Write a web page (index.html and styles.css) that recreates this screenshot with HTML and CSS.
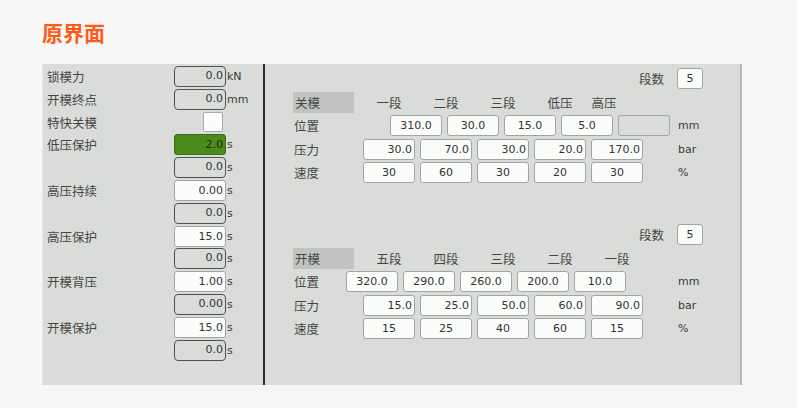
FILE: index.html
```
<!DOCTYPE html>
<html lang="zh">
<head>
<meta charset="utf-8">
<title>原界面</title>
<link rel="stylesheet" href="styles.css">
</head>
<body>
<div class="page">
  <h1 class="title">原界面</h1>
  <div class="panel">
    <div class="left">
      <div class="lrow"><span class="lbl">锁模力</span><span class="fld ro">0.0</span><span class="unit">kN</span></div>
      <div class="lrow"><span class="lbl">开模终点</span><span class="fld ro">0.0</span><span class="unit">mm</span></div>
      <div class="lrow"><span class="lbl">特快关模</span><span class="chk"></span><span class="unit"></span></div>
      <div class="lrow"><span class="lbl">低压保护</span><span class="fld green">2.0</span><span class="unit">s</span></div>
      <div class="lrow"><span class="lbl"></span><span class="fld ro">0.0</span><span class="unit">s</span></div>
      <div class="lrow"><span class="lbl">高压持续</span><span class="fld ed">0.00</span><span class="unit">s</span></div>
      <div class="lrow"><span class="lbl"></span><span class="fld ro">0.0</span><span class="unit">s</span></div>
      <div class="lrow"><span class="lbl">高压保护</span><span class="fld ed">15.0</span><span class="unit">s</span></div>
      <div class="lrow"><span class="lbl"></span><span class="fld ro">0.0</span><span class="unit">s</span></div>
      <div class="lrow"><span class="lbl">开模背压</span><span class="fld ed">1.00</span><span class="unit">s</span></div>
      <div class="lrow"><span class="lbl"></span><span class="fld ro">0.00</span><span class="unit">s</span></div>
      <div class="lrow"><span class="lbl">开模保护</span><span class="fld ed">15.0</span><span class="unit">s</span></div>
      <div class="lrow"><span class="lbl"></span><span class="fld ro">0.0</span><span class="unit">s</span></div>
    </div>
    <div class="divider"></div>
    <div class="right">
      <div class="group">
        <div class="segrow"><span class="seglbl">段数</span><span class="fld ed seg">5</span></div>
        <div class="grow"><span class="hdlbl">关模</span>
          <div class="cells"><span class="hd">一段</span><span class="hd">二段</span><span class="hd">三段</span><span class="hd">低压</span><span class="hd hd-shift">高压</span></div>
        </div>
        <div class="grow"><span class="rlbl">位置</span>
          <div class="cells cells-r"><span class="fld ed c">310.0</span><span class="fld ed c">30.0</span><span class="fld ed c">15.0</span><span class="fld ed c">5.0</span><span class="fld dis"></span></div>
          <span class="unit">mm</span>
        </div>
        <div class="grow"><span class="rlbl">压力</span>
          <div class="cells"><span class="fld ed">30.0</span><span class="fld ed">70.0</span><span class="fld ed">30.0</span><span class="fld ed">20.0</span><span class="fld ed">170.0</span></div>
          <span class="unit">bar</span>
        </div>
        <div class="grow"><span class="rlbl">速度</span>
          <div class="cells"><span class="fld ed c">30</span><span class="fld ed c">60</span><span class="fld ed c">30</span><span class="fld ed c">20</span><span class="fld ed c">30</span></div>
          <span class="unit">%</span>
        </div>
      </div>
      <div class="group group2">
        <div class="segrow"><span class="seglbl">段数</span><span class="fld ed seg">5</span></div>
        <div class="grow"><span class="hdlbl">开模</span>
          <div class="cells"><span class="hd">五段</span><span class="hd">四段</span><span class="hd">三段</span><span class="hd">二段</span><span class="hd">一段</span></div>
        </div>
        <div class="grow"><span class="rlbl">位置</span>
          <div class="cells cells-l"><span class="fld ed c">320.0</span><span class="fld ed c">290.0</span><span class="fld ed c">260.0</span><span class="fld ed c">200.0</span><span class="fld ed c">10.0</span></div>
          <span class="unit">mm</span>
        </div>
        <div class="grow"><span class="rlbl">压力</span>
          <div class="cells"><span class="fld ed">15.0</span><span class="fld ed">25.0</span><span class="fld ed">50.0</span><span class="fld ed">60.0</span><span class="fld ed">90.0</span></div>
          <span class="unit">bar</span>
        </div>
        <div class="grow"><span class="rlbl">速度</span>
          <div class="cells"><span class="fld ed c">15</span><span class="fld ed c">25</span><span class="fld ed c">40</span><span class="fld ed c">60</span><span class="fld ed c">15</span></div>
          <span class="unit">%</span>
        </div>
      </div>
    </div>
  </div>
</div>
</body>
</html>
```
FILE: styles.css
```
* { box-sizing: border-box; }
html, body { margin: 0; padding: 0; }
body {
  background: #f7f7f7;
  width: 797px;
  height: 408px;
  overflow: hidden;
  font-family: "DejaVu Sans", "Noto Sans CJK SC", sans-serif;
}
.page { padding-left: 42px; }
.title {
  margin: 0;
  padding-top: 20px;
  height: 64px;
  line-height: 24px;
  font-size: 21px;
  font-weight: 700;
  color: #ff5a17;
  font-family: "Noto Sans CJK SC", sans-serif;
}
.panel {
  display: flex;
  width: 700px;
  height: 321px;
  background: #d9dcd8;
  border-left: 1px solid #e6e8e6;
  border-right: 2px solid #b6bab6;
}
.left {
  width: 220px;
  padding: 2px 0 0 4px;
  display: flex;
  flex-direction: column;
  gap: 1.8px;
}
.lrow {
  display: grid;
  grid-template-columns: 127px 52px auto;
  height: 21px;
  align-items: center;
}
.lbl, .rlbl, .hdlbl, .seglbl, .hd {
  font-family: "Noto Sans CJK SC", sans-serif;
  font-size: 12.5px;
  color: #454545;
  line-height: 21px;
  white-space: nowrap;
}
.unit {
  font-size: 11px;
  color: #3a3a3a;
  padding-left: 1px;
  line-height: 21px;
}
.fld {
  display: block;
  width: 52px;
  height: 21px;
  font-size: 11px;
  line-height: 19px;
  color: #333;
  text-align: right;
  padding-right: 2px;
  border-radius: 3px;
  white-space: nowrap;
}
.fld.ro {
  background: #d9dcd8;
  border: 1.5px solid #505250;
  border-radius: 4px;
  line-height: 18px;
}
.fld.ed {
  background: #fbfdfa;
  border: 1px solid #a2a6a2;
}
.fld.green {
  background: #4c8a1c;
  border: 1px solid #3d6c17;
  color: #1e2a14;
}
.fld.dis {
  background: #d9dcd8;
  border: 1px solid #a2a6a2;
}
.fld.c { text-align: center; padding-right: 0; }
.chk {
  justify-self: end;
  margin-right: 3px;
  width: 20px;
  height: 20px;
  background: #fbfdfa;
  border: 1px solid #a9ada9;
  border-radius: 2px;
}
.divider {
  width: 2px;
  background: #2e2e2e;
}
.right {
  flex: 1;
  padding: 4px 0 0 29px;
}
.group {
  display: flex;
  flex-direction: column;
  gap: 2.5px;
}
.group2 { margin-top: 41px; }
.segrow {
  display: flex;
  justify-content: flex-end;
  align-items: center;
  gap: 13px;
  height: 21px;
  padding-right: 37px;
}
.fld.seg {
  width: 26px;
  text-align: center;
  padding-right: 0;
}
.grow {
  display: grid;
  grid-template-columns: 69px 315px auto;
  height: 21px;
  align-items: center;
}
.hdlbl {
  width: 61px;
  height: 21px;
  margin-left: -1px;
  padding-left: 2px;
  background: #c1c3c0;
}
.cells {
  display: flex;
  gap: 5px;
}
.cells-r { padding-left: 27px; }
.cells-l { margin-left: -17px; }
.hd {
  width: 52px;
  text-align: center;
}
.hd-shift { padding-right: 26px; }
.right .unit { padding-left: 0; }
```
